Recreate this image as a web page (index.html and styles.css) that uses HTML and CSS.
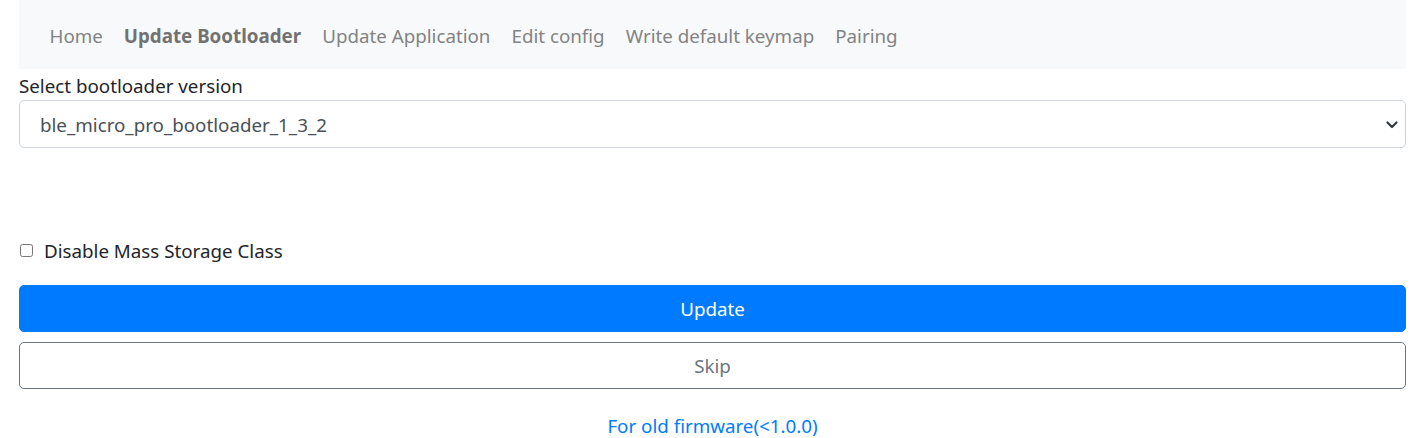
FILE: index.html
```html
<!DOCTYPE html>
<html lang="en">
<head>
<meta charset="utf-8">
<title>Update Bootloader</title>
<link rel="stylesheet" href="styles.css">
</head>
<body>
<div class="page">
  <nav class="navbar">
    <ul class="nav">
      <li><a class="nav-link" href="#">Home</a></li>
      <li><a class="nav-link active" href="#">Update Bootloader</a></li>
      <li><a class="nav-link" href="#">Update Application</a></li>
      <li><a class="nav-link" href="#">Edit config</a></li>
      <li><a class="nav-link" href="#">Write default keymap</a></li>
      <li><a class="nav-link" href="#">Pairing</a></li>
    </ul>
  </nav>
  <main class="content">
    <label class="field-label" for="ver">Select bootloader version</label>
    <div class="select-wrap">
      <select id="ver" class="select">
        <option>ble_micro_pro_bootloader_1_3_2</option>
      </select>
      <svg class="chevron" width="12" height="8" viewBox="0 0 12 8"><path d="M1.5 1.5 L6 6 L10.5 1.5" fill="none" stroke="#343a40" stroke-width="2.2" stroke-linecap="round" stroke-linejoin="round"/></svg>
    </div>
    <div class="spacer"></div>
    <label class="check">
      <input type="checkbox" class="check-input">
      <span>Disable Mass Storage Class</span>
    </label>
    <button class="btn btn-primary">Update</button>
    <button class="btn btn-outline">Skip</button>
    <a class="old-link" href="#">For old firmware(&lt;1.0.0)</a>
  </main>
</div>
</body>
</html>
```

FILE: styles.css
```css
* { box-sizing: border-box; }
html, body { margin: 0; padding: 0; background: #fff; }
body {
  font-family: "Noto Sans", "Open Sans", sans-serif;
  font-size: 18.75px;
  color: #212529;
}
.page {
  padding: 0 19px;
}
.navbar {
  background: #f8f9fa;
  height: 69px;
  display: flex;
  align-items: center;
  padding: 0 20px;
}
.nav {
  list-style: none;
  margin: 0;
  padding: 0;
  display: flex;
  align-items: center;
}
.nav-link {
  display: block;
  padding: 2px 10.5px 0;
  color: #828384;
  text-decoration: none;
  font-size: 18.75px;
  line-height: 26px;
}
.nav-link.active {
  font-weight: 700;
  color: #727272;
}
.content {
  display: flex;
  flex-direction: column;
}
.field-label {
  margin-top: 4px;
  line-height: 26px;
  height: 27px;
}
.select-wrap {
  position: relative;
}
.select {
  display: block;
  width: 100%;
  height: 48px;
  appearance: none;
  -webkit-appearance: none;
  border: 1px solid #ced4da;
  border-radius: 5px;
  background: #fff;
  padding: 0 40px 0 20px;
  font-family: inherit;
  font-size: 18.75px;
  color: #495057;
}
.chevron {
  position: absolute;
  right: 8px;
  top: 21px;
}
.spacer { height: 89px; }
.check {
  display: flex;
  align-items: center;
  gap: 11px;
  height: 26px;
  padding-left: 1px;
}
.check-input {
  margin: 0;
  width: 13px;
  height: 13px;
}
.btn {
  display: block;
  width: 100%;
  height: 47px;
  border-radius: 5px;
  font-family: inherit;
  font-size: 18.75px;
  cursor: pointer;
}
.btn-primary {
  margin-top: 22px;
  background: #007bff;
  border: 1px solid #007bff;
  color: #fff;
}
.btn-outline {
  margin-top: 10px;
  background: #fff;
  border: 1px solid #6c757d;
  color: #6c757d;
}
.old-link {
  margin-top: 24px;
  align-self: center;
  color: #007bff;
  text-decoration: none;
  font-size: 18.75px;
  line-height: 26px;
}
```
